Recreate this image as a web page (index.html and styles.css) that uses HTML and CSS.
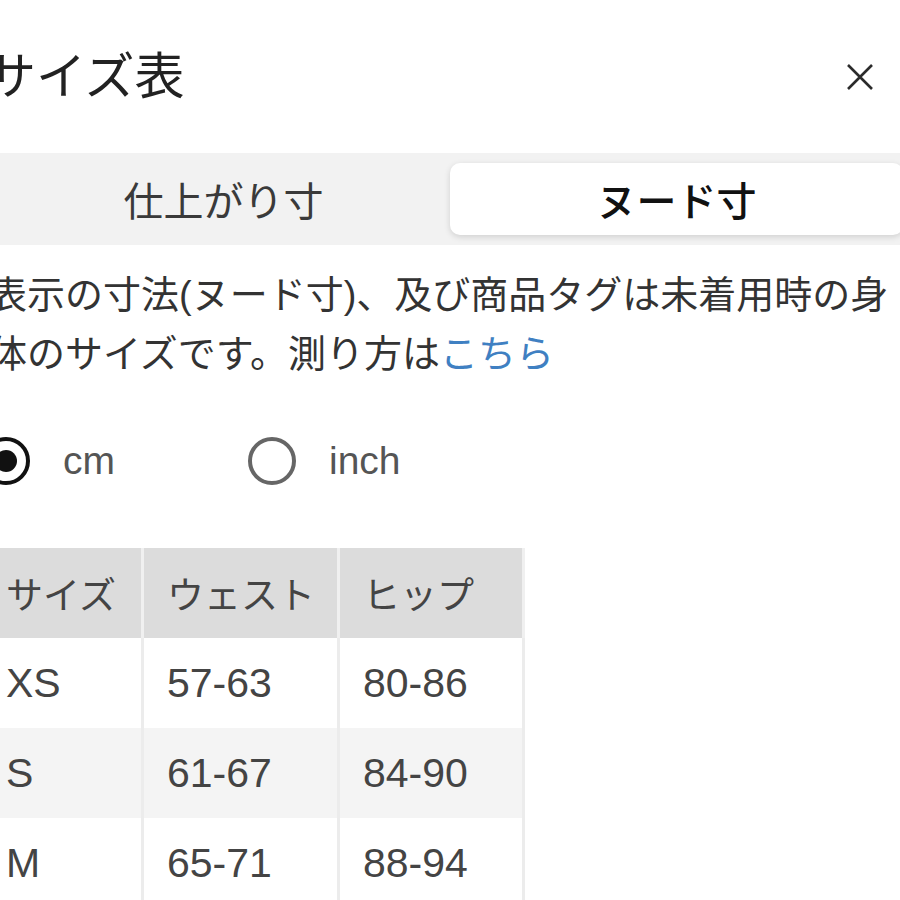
FILE: index.html
```html
<!DOCTYPE html>
<html lang="ja">
    <head>
        <meta charset="utf-8"/>
        <title>サイズ表</title>
        <link rel="stylesheet" href="styles.css">
    </head>
    <body>
        <div class="sheet">
            <div class="sheetHead">
                <h1 class="sheetTitle">サイズ表</h1>
                <button class="closeBtn" aria-label="閉じる">
                    <svg width="32" height="32" viewBox="0 0 32 32">
                        <path d="M4 4 L28 28 M28 4 L4 28" stroke="#2b2b2b" stroke-width="2.6" fill="none"/>
                    </svg>
                </button>
            </div>

            <div class="segment">
                <div class="segTab">仕上がり寸</div>
                <div class="segTab active">ヌード寸</div>
            </div>

            <p class="note">表示の寸法(ヌード寸)、及び商品タグは未着用時の身体のサイズです。測り方は<a href="#">こちら</a></p>

            <div class="units">
                <label class="unit">
                    <span class="radio checked"></span>
                    <span class="unitLabel">cm</span>
                </label>
                <label class="unit">
                    <span class="radio"></span>
                    <span class="unitLabel">inch</span>
                </label>
            </div>

            <table class="sizeTable">
                <tr>
                    <th class="colSize">サイズ</th>
                    <th class="colWaist">ウェスト</th>
                    <th class="colHip">ヒップ</th>
                </tr>
                <tr>
                    <td>XS</td>
                    <td>57-63</td>
                    <td>80-86</td>
                </tr>
                <tr class="alt">
                    <td>S</td>
                    <td>61-67</td>
                    <td>84-90</td>
                </tr>
                <tr>
                    <td>M</td>
                    <td>65-71</td>
                    <td>88-94</td>
                </tr>
            </table>
        </div>
    </body>
</html>
```

FILE: styles.css
```css
html, body {
    margin: 0;
    background: white;
    overflow: hidden;
}

body {
    font-family: "Liberation Sans", "Noto Sans CJK JP", sans-serif;
    color: #333333;
}

.sheet {
    width: 922px;
    margin-left: -11px;
}

.sheetHead {
    display: flex;
    justify-content: space-between;
    align-items: center;
    padding: 40px 35px 0 0;
    height: 74px;
}

.sheetTitle {
    margin: 0 0 0 -3px;
    font-size: 50px;
    font-weight: normal;
    line-height: 74px;
    color: #222222;
}

.closeBtn {
    border: none;
    background: none;
    padding: 0;
    width: 32px;
    height: 32px;
}

.segment {
    display: flex;
    margin-top: 39px;
    padding: 10px 8px;
    background: #f2f2f2;
}

.segTab {
    flex: 1;
    height: 72px;
    display: flex;
    align-items: center;
    justify-content: center;
    font-size: 40px;
    color: #3a3a3a;
}

.segTab.active {
    background: white;
    border-radius: 10px;
    box-shadow: 0 2px 6px rgba(0, 0, 0, 0.14);
    color: #111111;
    font-weight: 500;
}

.note {
    margin: 21px 0 0 0;
    font-size: 38px;
    line-height: 59px;
    color: #333333;
}

.note a {
    color: #3f80c2;
    text-decoration: none;
}

.units {
    display: flex;
    align-items: center;
    height: 60px;
    margin: 47px 0 0 -7px;
}

.unit {
    display: flex;
    align-items: center;
    gap: 33px;
}

.unit:first-child {
    width: 266px;
}

.radio {
    box-sizing: border-box;
    width: 48px;
    height: 48px;
    border: 4px solid #666666;
    border-radius: 50%;
    display: flex;
    align-items: center;
    justify-content: center;
}

.radio.checked {
    border-color: #111111;
}

.radio.checked::after {
    content: "";
    width: 22px;
    height: 22px;
    border-radius: 50%;
    background: #111111;
}

.unitLabel {
    font-size: 39px;
    color: #555555;
}

.sizeTable {
    margin: 57px 0 0 -9px;
    border-collapse: collapse;
    color: #444444;
}

.sizeTable th,
.sizeTable td {
    height: 90px;
    padding: 0 0 0 23px;
    text-align: left;
    box-sizing: border-box;
    border: 3px solid #ececec;
    border-top: none;
    border-bottom: none;
}

.sizeTable th {
    background: #dcdcdc;
    font-size: 37px;
    font-weight: normal;
    border-color: #f0f0f0;
}

.sizeTable td {
    font-size: 41px;
    background: white;
}

.sizeTable tr.alt td {
    background: #f4f4f4;
}

.colSize {
    width: 161px;
}

.colWaist {
    width: 196px;
}

.colHip {
    width: 185px;
}
```
